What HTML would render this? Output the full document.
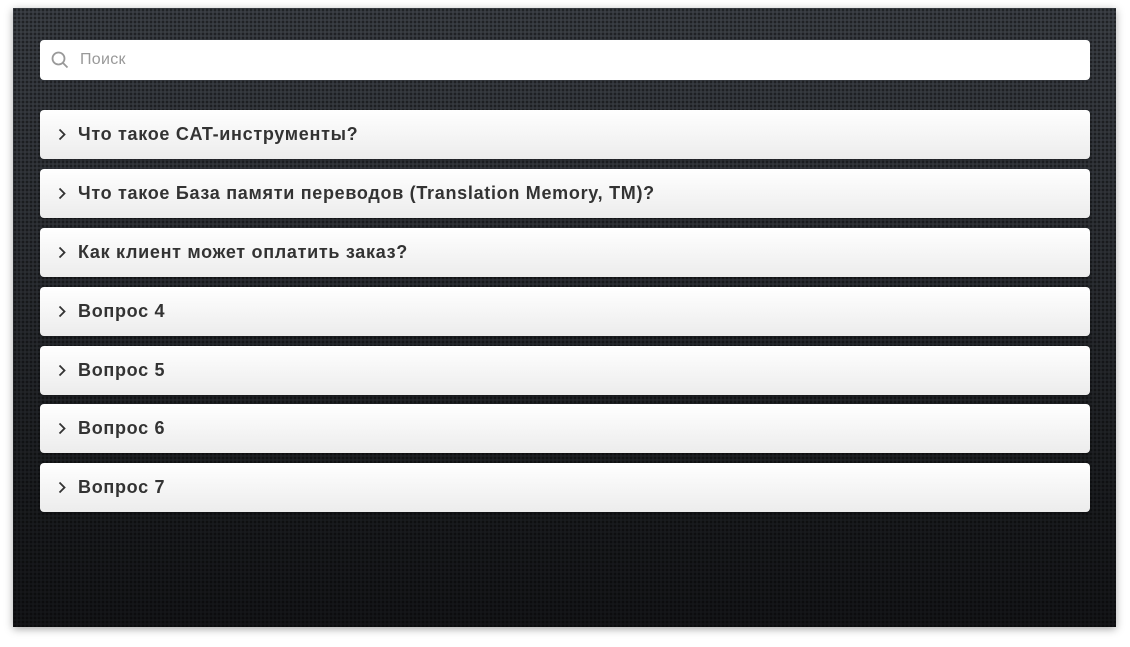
<!DOCTYPE html>
<html><head><meta charset="utf-8"><style>
html,body{margin:0;padding:0;background:#fff;width:1130px;height:647px;overflow:hidden;font-family:"Liberation Sans","DejaVu Sans",sans-serif}
.panel{position:absolute;left:13px;top:8px;width:1103px;height:619px;
background:radial-gradient(circle,rgba(0,0,0,.45) 1.2px,transparent 1.6px) 0 0/4px 4px,linear-gradient(#3b3f45 0%,#2c2f34 40%,#1a1c1f 80%,#141518 100%);
box-shadow:0 2px 8px rgba(0,0,0,.35)}
.search{position:absolute;left:27px;top:32px;width:1050px;height:40px;background:#fff;border-radius:4px}
.search svg{position:absolute;left:11px;top:11px}
.search span{position:absolute;left:40px;top:11px;font-size:16px;color:#999;letter-spacing:0.3px}
.item{position:absolute;left:27px;width:1050px;height:49px;border-radius:4px;background:linear-gradient(#fff,#ececec);box-shadow:0 1px 2px rgba(0,0,0,.4)}
.item svg{position:absolute;left:18px;top:18px}
.item span{position:absolute;left:38px;top:14px;font-size:18px;font-weight:bold;color:#333;letter-spacing:0.7px}
</style></head><body>
<div class="panel">
<div class="search"><svg width="18" height="18" viewBox="0 0 18 18"><circle cx="7.5" cy="7.5" r="6" fill="none" stroke="#999" stroke-width="1.8"/><path d="M12 12l4.5 4.5" stroke="#999" stroke-width="1.8"/></svg><span>Поиск</span></div>
<div class="item" style="top:102px"><svg width="8" height="13" viewBox="0 0 8 13"><path d="M1.5 1.5l5 5-5 5" fill="none" stroke="#333" stroke-width="1.8"/></svg><span>Что такое CAT-инструменты?</span></div>
<div class="item" style="top:161px"><svg width="8" height="13" viewBox="0 0 8 13"><path d="M1.5 1.5l5 5-5 5" fill="none" stroke="#333" stroke-width="1.8"/></svg><span>Что такое База памяти переводов (Translation Memory, TM)?</span></div>
<div class="item" style="top:220px"><svg width="8" height="13" viewBox="0 0 8 13"><path d="M1.5 1.5l5 5-5 5" fill="none" stroke="#333" stroke-width="1.8"/></svg><span>Как клиент может оплатить заказ?</span></div>
<div class="item" style="top:279px"><svg width="8" height="13" viewBox="0 0 8 13"><path d="M1.5 1.5l5 5-5 5" fill="none" stroke="#333" stroke-width="1.8"/></svg><span>Вопрос 4</span></div>
<div class="item" style="top:338px"><svg width="8" height="13" viewBox="0 0 8 13"><path d="M1.5 1.5l5 5-5 5" fill="none" stroke="#333" stroke-width="1.8"/></svg><span>Вопрос 5</span></div>
<div class="item" style="top:396px"><svg width="8" height="13" viewBox="0 0 8 13"><path d="M1.5 1.5l5 5-5 5" fill="none" stroke="#333" stroke-width="1.8"/></svg><span>Вопрос 6</span></div>
<div class="item" style="top:455px"><svg width="8" height="13" viewBox="0 0 8 13"><path d="M1.5 1.5l5 5-5 5" fill="none" stroke="#333" stroke-width="1.8"/></svg><span>Вопрос 7</span></div>
</div>
</body></html>
